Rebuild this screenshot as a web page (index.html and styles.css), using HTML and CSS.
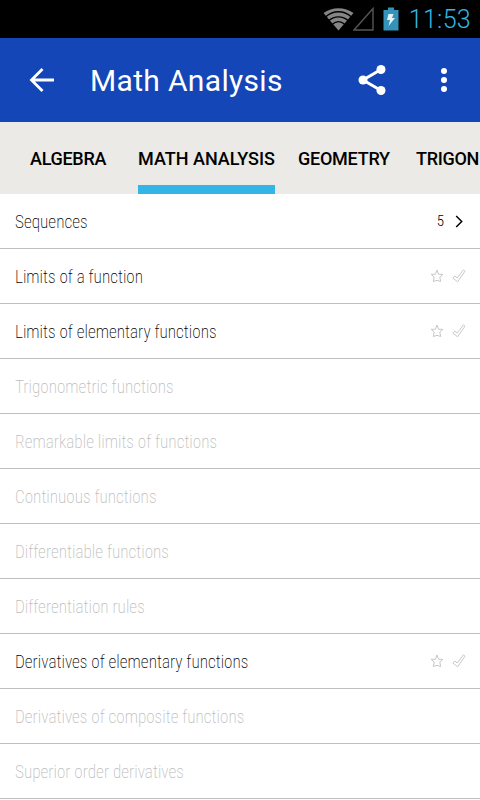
FILE: index.html
```html
<!DOCTYPE html>
<html lang="en">
<head>
    <meta charset="UTF-8">
    <meta name="viewport" content="width=device-width, initial-scale=1.0">
    <title>Math Analysis</title>
    <link rel="stylesheet" href="styles.css">
</head>
<body>
    <!-- Icons shared by the rows -->
    <svg class="sprite" width="0" height="0">
        <symbol id="star" viewBox="0 0 14 14">
            <path d="M7 1L8.6 5.3H12.9L9.8 8L10.7 12.5L7 11.3L3.3 12.5L4.2 8L1.1 5.3H5.4Z"/>
        </symbol>
        <symbol id="check" viewBox="0 0 14 14">
            <path d="M0.8 9L2.8 7L5.2 9L11.4 0.9L13 2.2L5.6 12.8Z"/>
        </symbol>
    </svg>

    <div class="status-bar">
        <svg class="wifi" width="31" height="24" viewBox="0 0 31 24">
            <path class="wifi-fill" d="M0.5 6C9 -0.5 22 -0.5 30.5 6L15.5 23.5Z"/>
            <path class="wifi-gap" d="M2.5 10C10.5 3 20.5 3 28.5 10M5.5 13.8C11.5 8.5 19.5 8.5 25.5 13.8M9 17.5C13 14 18 14 22 17.5"/>
        </svg>
        <svg class="signal" width="21" height="24" viewBox="0 0 21 24">
            <path d="M20 1.5V23H1Z"/>
        </svg>
        <svg class="battery" width="16" height="24" viewBox="0 0 16 24">
            <path fill="#3493b8" d="M5 0.5H11V3H15.5V23.5H0.5V3H5Z"/>
            <path fill="#e4f2f6" d="M5.5 7H10.5L9 11H12L5.5 19L7 13H4Z"/>
        </svg>
        <span class="clock">11:53</span>
    </div>

    <div class="action-bar">
        <svg class="back" width="26" height="26" viewBox="0 0 26 26">
            <path d="M25 13H3M13.5 2L2.5 13L13.5 24"/>
        </svg>
        <div class="title">Math Analysis</div>
        <svg class="share" width="28" height="32" viewBox="0 0 28 32">
            <path d="M23 5.5L5 16L23 26.5"/>
            <circle cx="23" cy="5.5" r="4.5"/>
            <circle cx="5" cy="16" r="4.5"/>
            <circle cx="23" cy="26.5" r="4.5"/>
        </svg>
        <svg class="more" width="6" height="24" viewBox="0 0 6 24">
            <circle cx="3" cy="3" r="3"/>
            <circle cx="3" cy="12" r="3"/>
            <circle cx="3" cy="21" r="3"/>
        </svg>
    </div>

    <div class="tabs">
        <div class="tab algebra">ALGEBRA</div>
        <div class="tab analysis active">MATH ANALYSIS</div>
        <div class="tab geometry">GEOMETRY</div>
        <div class="tab trigonometry">TRIGON</div>
    </div>

    <div class="list">
        <div class="row">
            <span class="label">Sequences</span>
            <span class="count">5</span>
            <svg class="chevron" width="8" height="13" viewBox="0 0 8 13"><path d="M1.2 1L6.7 6.5L1.2 12"/></svg>
        </div>
        <div class="row">
            <span class="label">Limits of a function</span>
            <svg class="mark"><use href="#star"/></svg>
            <svg class="mark"><use href="#check"/></svg>
        </div>
        <div class="row">
            <span class="label">Limits of elementary functions</span>
            <svg class="mark"><use href="#star"/></svg>
            <svg class="mark"><use href="#check"/></svg>
        </div>
        <div class="row locked"><span class="label">Trigonometric functions</span></div>
        <div class="row locked"><span class="label">Remarkable limits of functions</span></div>
        <div class="row locked"><span class="label">Continuous functions</span></div>
        <div class="row locked"><span class="label">Differentiable functions</span></div>
        <div class="row locked"><span class="label">Differentiation rules</span></div>
        <div class="row">
            <span class="label">Derivatives of elementary functions</span>
            <svg class="mark"><use href="#star"/></svg>
            <svg class="mark"><use href="#check"/></svg>
        </div>
        <div class="row locked"><span class="label">Derivatives of composite functions</span></div>
        <div class="row locked"><span class="label">Superior order derivatives</span></div>
    </div>
</body>
</html>
```
FILE: styles.css
```css
body {
    margin: 0;
    width: 480px;
    height: 800px;
    overflow: hidden;
    background: #fff;
    color: #000;
    font-family: Roboto, sans-serif;
}

svg {
    flex: none;
    display: block;
}

.sprite {
    position: absolute;
}

.status-bar {
    display: flex;
    align-items: center;
    justify-content: flex-end;
    height: 38px;
    padding-right: 9px;
    box-sizing: border-box;
    background: #000;
}

.wifi-fill {
    fill: #858585;
}

.wifi-gap {
    fill: none;
    stroke: #000;
    stroke-width: 1.3;
}

.signal {
    margin-left: -1px;
    margin-right: 9px;
}

.signal path {
    fill: none;
    stroke: #555;
    stroke-width: 1.4;
}

.clock {
    margin-left: 10px;
    color: #33b5e5;
    font-size: 25px;
    font-weight: 350;
    letter-spacing: 0.3px;
}

.action-bar {
    display: flex;
    align-items: center;
    height: 84px;
    padding: 0 33px 0 29px;
    box-sizing: border-box;
    background: #1446b8;
    color: #fff;
}

.back path {
    fill: none;
    stroke: #fff;
    stroke-width: 2.8;
}

.title {
    flex: 1;
    margin-left: 35px;
    font-size: 30px;
    letter-spacing: 0.33px;
}

.share {
    margin-right: 55px;
    fill: #fff;
}

.share path {
    fill: none;
    stroke: #fff;
    stroke-width: 3;
}

.more {
    fill: #fff;
}

.tabs {
    display: flex;
    height: 72px;
    padding-left: 30px;
    box-sizing: border-box;
    background: #ebeae6;
    overflow: hidden;
}

.tab {
    flex: none;
    height: 72px;
    box-sizing: border-box;
    padding-top: 2px;
    border-bottom: 9px solid transparent;
    line-height: 70px;
    font-size: 18px;
    font-weight: 500;
    white-space: nowrap;
}

.algebra {
    width: 108px;
    letter-spacing: -0.3px;
}

.analysis {
    width: 137px;
}

.geometry {
    width: 141px;
    padding-left: 23px;
    letter-spacing: -0.25px;
}

.trigonometry {
    letter-spacing: -0.3px;
}

.active {
    border-bottom-color: #33b5e5;
}

.row {
    display: flex;
    align-items: center;
    height: 55px;
    padding: 0 14px 0 15px;
    box-sizing: border-box;
    border-bottom: 1px solid #bfbfbf;
}

.label {
    flex: 1;
    font-size: 18px;
    font-weight: 200;
    font-stretch: condensed;
    transform: scaleX(0.954);
    transform-origin: left;
}

.locked {
    color: #bdbdbd;
}

.count {
    margin-right: 11px;
    font-size: 15px;
    font-weight: 350;
    font-stretch: condensed;
}

.chevron {
    margin-right: 3px;
}

.chevron path {
    fill: none;
    stroke: #000;
    stroke-width: 1.5;
}

.mark {
    width: 14px;
    height: 14px;
    margin-left: 8px;
    fill: none;
    stroke: #c8c8c8;
    stroke-width: 1;
}
```
